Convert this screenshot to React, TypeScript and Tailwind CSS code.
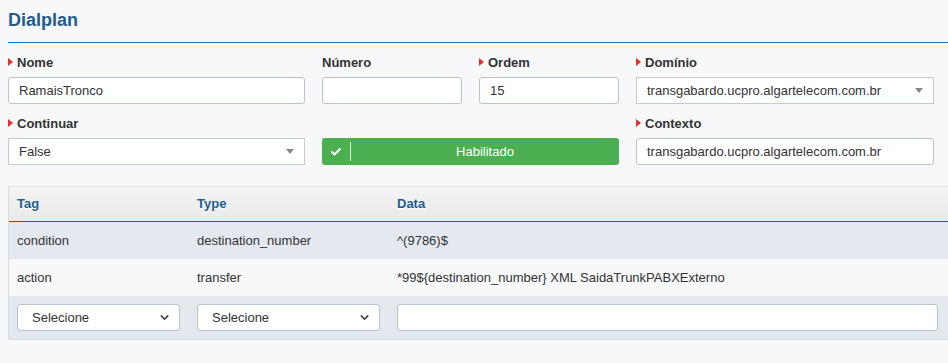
import { Check, ChevronDown } from 'lucide-react';

// Red marker shown before required labels
function Req() {
  return (
    <span className="mr-[4px] inline-block h-0 w-0 border-y-[4px] border-l-[5px] border-y-transparent border-l-[#e8302a] align-[1px]" />
  );
}

function Label({ text, required }: { text: string; required?: boolean }) {
  return (
    <div className="mb-[5px] h-[18px] text-[13px] font-bold leading-[18px] text-[#333]">
      {required && <Req />}
      {text}
    </div>
  );
}

function TextInput({ value }: { value?: string }) {
  return (
    <div className="flex h-[27px] items-center rounded-[3px] border border-[#b9c3ce] bg-white px-[10px] text-[13px] text-[#333]">
      {value}
    </div>
  );
}

// Chosen-style select with a small grey caret
function CaretSelect({ value }: { value: string }) {
  return (
    <div className="flex h-[27px] items-center justify-between border border-[#c3cbd4] bg-white pl-[10px] pr-[10px] text-[13px] text-[#333]">
      <span>{value}</span>
      <span className="h-0 w-0 border-x-[4px] border-t-[5px] border-x-transparent border-t-[#888]" />
    </div>
  );
}

// Native-looking select used in the table row
function NativeSelect({ value }: { value: string }) {
  return (
    <div className="flex h-[27px] items-center justify-between rounded-[3px] border border-[#b9c3ce] bg-white pl-[14px] pr-[8px] text-[13px] text-[#333]">
      <span>{value}</span>
      <ChevronDown size={13} strokeWidth={3} className="text-[#444]" />
    </div>
  );
}

const rows = [
  { tag: 'condition', type: 'destination_number', data: '^(9786)$' },
  { tag: 'action', type: 'transfer', data: '*99${destination_number} XML SaidaTrunkPABXExterno' }
];

export default function App() {
  return (
    <div
      className="min-h-[363px] bg-[#f7f8fa] pl-[8px]"
      style={{ fontFamily: '"Liberation Sans", Arial, sans-serif' }}
    >
      <div className="border-b border-[#1c74b8] pb-[10px] pt-[8px]">
        <h1 className="text-[18px] font-bold leading-[24px] text-[#1d5d8f]">Dialplan</h1>
      </div>

      <div className="mt-[11px] grid grid-cols-[297px_140px_140px_298px] gap-x-[17px] gap-y-[11px]">
        <div>
          <Label text="Nome" required />
          <TextInput value="RamaisTronco" />
        </div>
        <div>
          <Label text="Número" />
          <TextInput />
        </div>
        <div>
          <Label text="Ordem" required />
          <TextInput value="15" />
        </div>
        <div>
          <Label text="Domínio" required />
          <CaretSelect value="transgabardo.ucpro.algartelecom.com.br" />
        </div>

        <div>
          <Label text="Continuar" required />
          <CaretSelect value="False" />
        </div>
        <div className="col-span-2 flex flex-col justify-end">
          <div className="flex h-[27px] items-center rounded-[3px] bg-[#4caf50] text-[13px] text-white">
            <div className="flex h-full w-[28px] items-center justify-center">
              <Check size={12} strokeWidth={4} />
            </div>
            <div className="h-[19px] w-px bg-[#d9efd9]" />
            <div className="flex-1 text-center">Habilitado</div>
          </div>
        </div>
        <div>
          <Label text="Contexto" required />
          <TextInput value="transgabardo.ucpro.algartelecom.com.br" />
        </div>
      </div>

      <div className="mt-[21px] border-y border-l border-[#d9dcdf] text-[13px] text-[#333]">
        <div className="grid h-[35px] grid-cols-[180px_200px_1fr] items-center border-b border-[#1c6aa8] bg-gradient-to-b from-[#f4f4f4] to-[#eaeaea] pl-[8px] font-bold text-[#1d5d8f] [text-shadow:0_1px_0_#fff]">
          <div>Tag</div>
          <div>Type</div>
          <div>Data</div>
        </div>
        {rows.map((r, i) => (
          <div
            key={r.tag}
            className={`grid h-[37px] grid-cols-[180px_200px_1fr] items-center pl-[8px] ${
              i === 0 ? 'bg-[#e4e9f0]' : 'bg-[#f7f8fa]'
            }`}
          >
            <div>{r.tag}</div>
            <div>{r.type}</div>
            <div>{r.data}</div>
          </div>
        ))}
        <div className="grid h-[43px] grid-cols-[180px_200px_1fr] items-center bg-[#e4e9f0] pl-[8px] pr-[10px]">
          <div className="pr-[17px]">
            <NativeSelect value="Selecione" />
          </div>
          <div className="pr-[17px]">
            <NativeSelect value="Selecione" />
          </div>
          <TextInput />
        </div>
      </div>
    </div>
  );
}
